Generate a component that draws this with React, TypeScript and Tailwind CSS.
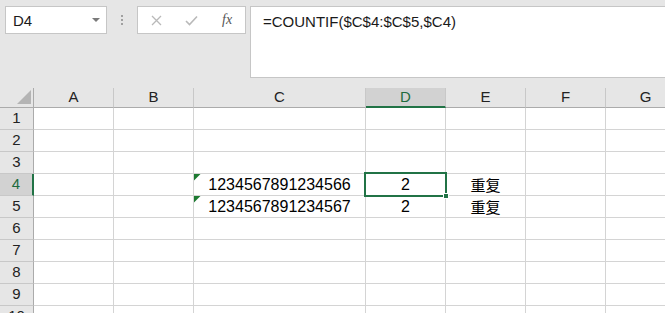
import React from "react";

const cols = [
  { key: "A", w: "w-[80px]" },
  { key: "B", w: "w-[80px]" },
  { key: "C", w: "w-[172px]" },
  { key: "D", w: "w-[80px]" },
  { key: "E", w: "w-[80px]" },
  { key: "F", w: "w-[80px]" },
  { key: "G", w: "w-[80px]" },
];

const data: Record<string, string> = {
  C4: "1234567891234566",
  D4: "2",
  E4: "重复",
  C5: "1234567891234567",
  D5: "2",
  E5: "重复",
};

function Triangle() {
  return (
    <svg className="absolute left-0 top-0" width="7" height="7" viewBox="0 0 7 7">
      <polygon points="0,0 6.5,0 0,6.5" fill="#1d7a31" />
    </svg>
  );
}

export default function App() {
  const rows = [1, 2, 3, 4, 5, 6, 7, 8, 9, 10];
  return (
    <div
      className="w-[665px] h-[313px] overflow-hidden bg-[#e6e6e6] text-[#222]"
      style={{ fontFamily: '"Liberation Sans", "Noto Sans CJK SC", sans-serif' }}
    >
      {/* Top bar */}
      <div className="flex h-[88px] items-start pt-[6px] pl-[5px]">
        <div className="flex h-[28px] w-[102px] items-center justify-between border border-[#c6c6c6] bg-white pl-[7px] pr-[6px]">
          <span className="text-[15px] leading-none text-[#1a1a1a]">D4</span>
          <svg width="8" height="5" viewBox="0 0 8 5" className="mt-[1px]">
            <polygon points="0,0 8,0 4,4" fill="#7a7a7a" />
          </svg>
        </div>
        <div className="flex h-[28px] w-[30px] flex-col items-center justify-center gap-[2px] pb-[1px]">
          <span className="block h-[2px] w-[2px] bg-[#a0a0a0]" />
          <span className="block h-[2px] w-[2px] bg-[#a0a0a0]" />
          <span className="block h-[2px] w-[2px] bg-[#a0a0a0]" />
        </div>
        <div className="flex h-[28px] w-[109px] items-center border border-[#c6c6c6] bg-white">
          <div className="flex w-[36px] justify-center pl-[2px]">
            <svg width="11" height="11" viewBox="0 0 11 11">
              <path d="M1 1 L10 10 M10 1 L1 10" stroke="#b9b9b9" strokeWidth="1.3" />
            </svg>
          </div>
          <div className="flex w-[36px] justify-center">
            <svg width="13" height="11" viewBox="0 0 13 11">
              <path d="M1 6 L4.5 9.5 L12 1.5" stroke="#b9b9b9" strokeWidth="1.6" fill="none" />
            </svg>
          </div>
          <div className="flex w-[36px] justify-center">
            <span
              className="text-[14px] italic leading-none text-[#555]"
              style={{ fontFamily: '"Liberation Serif", serif' }}
            >
              fx
            </span>
          </div>
        </div>
        <div className="ml-[4px] h-[72px] flex-1 border border-r-0 border-[#c6c6c6] bg-white pl-[12px] pt-[3px]">
          <span className="text-[15px] leading-[24px] text-[#1a1a1a]">=COUNTIF($C$4:$C$5,$C4)</span>
        </div>
      </div>

      {/* Grid */}
      <div className="flex flex-col bg-white">
        {/* Header row */}
        <div className="flex h-[20px] bg-[#e6e6e6]">
          <div className="relative flex h-[20px] w-[34px] shrink-0 items-end justify-end border-r border-b border-[#ababab] pb-[3px] pr-[2px]">
            <svg width="14" height="14" viewBox="0 0 14 14">
              <polygon points="14,0 14,14 0,14" fill="#b4b4b4" />
            </svg>
          </div>
          {cols.map((c) => {
            const sel = c.key === "D";
            return (
              <div
                key={c.key}
                className={
                  sel
                    ? `${c.w} shrink-0 flex h-[20px] items-center justify-center border-r border-[#c8c8c8] border-b-2 border-b-[#217346] bg-[#d2d2d2] text-[15px] text-[#1e6b3e]`
                    : `${c.w} shrink-0 flex h-[20px] items-center justify-center border-r border-b border-r-[#c8c8c8] border-b-[#ababab] text-[15px] text-[#222]`
                }
              >
                {c.key}
              </div>
            );
          })}
        </div>
        {rows.map((r) => {
          const selRow = r === 4;
          return (
            <div key={r} className="flex h-[22px]">
              <div
                className={
                  selRow
                    ? "flex h-[22px] w-[34px] shrink-0 items-center justify-center border-b border-b-[#c8c8c8] border-r-2 border-r-[#217346] bg-[#d2d2d2] text-[15px] text-[#1e6b3e]"
                    : "flex h-[22px] w-[34px] shrink-0 items-center justify-center border-b border-r border-b-[#c8c8c8] border-r-[#ababab] bg-[#e6e6e6] text-[15px] text-[#222]"
                }
              >
                {r}
              </div>
              {cols.map((c) => {
                const id = `${c.key}${r}`;
                const v = data[id];
                const isSel = id === "D4";
                const flagged = c.key === "C" && (r === 4 || r === 5);
                const cjk = c.key === "E";
                return (
                  <div
                    key={id}
                    className={`${c.w} relative flex h-[22px] shrink-0 items-center justify-center border-r border-b border-[#d4d4d4]`}
                  >
                    {flagged && <Triangle />}
                    {v && (
                      <span
                        className={
                          cjk
                            ? "pt-[1px] text-[15px] leading-none text-black"
                            : "pt-[1px] text-[16px] leading-none text-black"
                        }
                      >
                        {v}
                      </span>
                    )}
                    {isSel && (
                      <div className="absolute -left-[2px] -top-[2px] z-10 h-[25px] w-[83px] border-2 border-[#217346]">
                        <div className="absolute left-[77px] top-[19px] h-[6px] w-[6px] border border-white bg-[#217346]" />
                      </div>
                    )}
                  </div>
                );
              })}
            </div>
          );
        })}
      </div>
    </div>
  );
}
